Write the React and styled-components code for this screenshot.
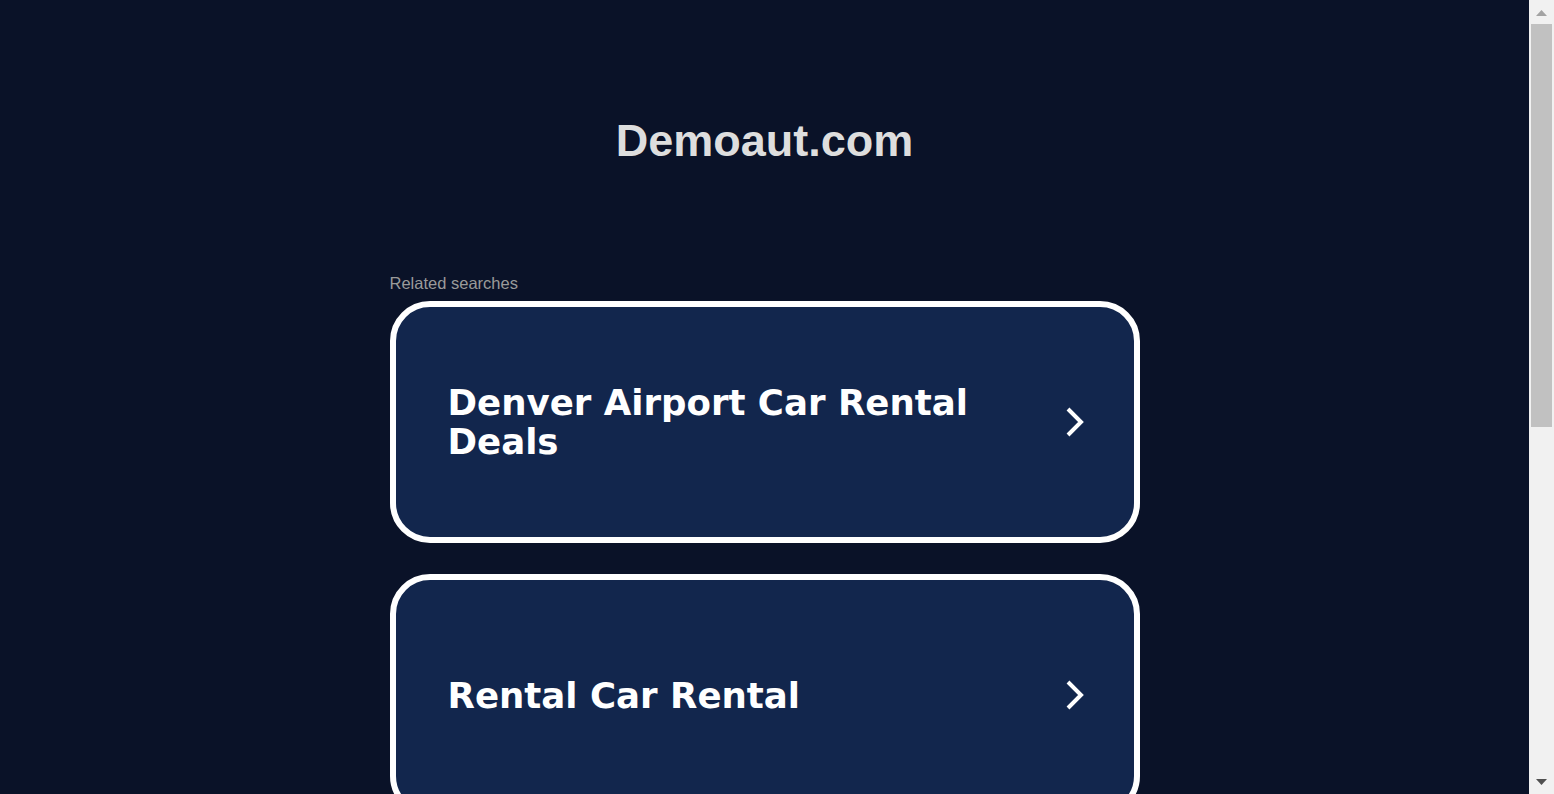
import styled, { createGlobalStyle } from 'styled-components';

const GlobalStyle = createGlobalStyle`
  html, body {
    margin: 0;
    padding: 0;
    background: #0a1228;
  }
  body {
    font-family: 'Liberation Sans', Arial, sans-serif;
  }
`;

const searches = [
  'Denver Airport Car Rental Deals',
  'Rental Car Rental',
  'Cheap Car Rental Deals',
  'Airport Car Rental Near Me',
];

function Chevron() {
  return (
    <svg width="22" height="32" viewBox="0 0 22 32" fill="none">
      <path d="M4 3 L17 16 L4 29" stroke="#fff" strokeWidth="4" strokeLinecap="butt" />
    </svg>
  );
}

function Arrow({ down, color }) {
  return (
    <svg width="11" height="6" viewBox="0 0 11 6">
      <path d={down ? 'M0 0 L11 0 L5.5 6 Z' : 'M5.5 0 L11 6 L0 6 Z'} fill={color} />
    </svg>
  );
}

export default function App() {
  return (
    <>
      <GlobalStyle />
      <Viewport>
        <Page>
          <Title>Demoaut.com</Title>
          <Column>
            <Label>Related searches</Label>
            <List>
              {searches.map((s) => (
                <Card key={s} href="#">
                  <CardText>{s}</CardText>
                  <Chevron />
                </Card>
              ))}
            </List>
          </Column>
        </Page>
        <ScrollBar>
          <ScrollButton $pad="10px 0 0">
            <Arrow color="#a3a3a3" />
          </ScrollButton>
          <Track>
            <Thumb />
          </Track>
          <ScrollButton $pad="9px 0 0">
            <Arrow down color="#505050" />
          </ScrollButton>
        </ScrollBar>
      </Viewport>
    </>
  );
}

const Viewport = styled.div`
  display: flex;
  height: 100vh;
  overflow: hidden;
`;

const Page = styled.main`
  flex: 1;
  min-width: 0;
  display: flex;
  flex-direction: column;
  align-items: center;
  padding: 112px 0 115px;
`;

const ScrollBar = styled.div`
  width: 25px;
  flex-shrink: 0;
  display: flex;
  flex-direction: column;
  background: #f1f1f1;
`;

const ScrollButton = styled.div`
  height: 24px;
  box-sizing: border-box;
  display: flex;
  justify-content: center;
  align-items: flex-start;
  padding: ${(p) => p.$pad};
`;

const Track = styled.div`
  flex: 1;
  padding: 0 2px;
`;

const Thumb = styled.div`
  height: 403px;
  background: #c1c1c1;
`;

const Title = styled.h1`
  margin: 0;
  font-family: 'Liberation Sans', Arial, sans-serif;
  font-size: 45px;
  font-weight: 700;
  line-height: 58px;
  color: #dedede;
`;

const Column = styled.div`
  width: 750px;
  margin-top: 104px;
`;

const Label = styled.div`
  font-size: 16.5px;
  color: #9a9a9a;
  line-height: 18px;
  margin-bottom: 9px;
`;

const List = styled.div`
  display: flex;
  flex-direction: column;
  gap: 31px;
`;

const Card = styled.a`
  box-sizing: border-box;
  display: flex;
  align-items: center;
  justify-content: space-between;
  min-height: 242px;
  padding: 0 48px 0 52px;
  border: 6px solid #fff;
  border-radius: 40px;
  background: #12264d;
  text-decoration: none;
`;

const CardText = styled.span`
  max-width: 540px;
  font-family: 'DejaVu Sans', Verdana, sans-serif;
  font-size: 35.6px;
  font-weight: 700;
  line-height: 39px;
  color: #fff;
`;
